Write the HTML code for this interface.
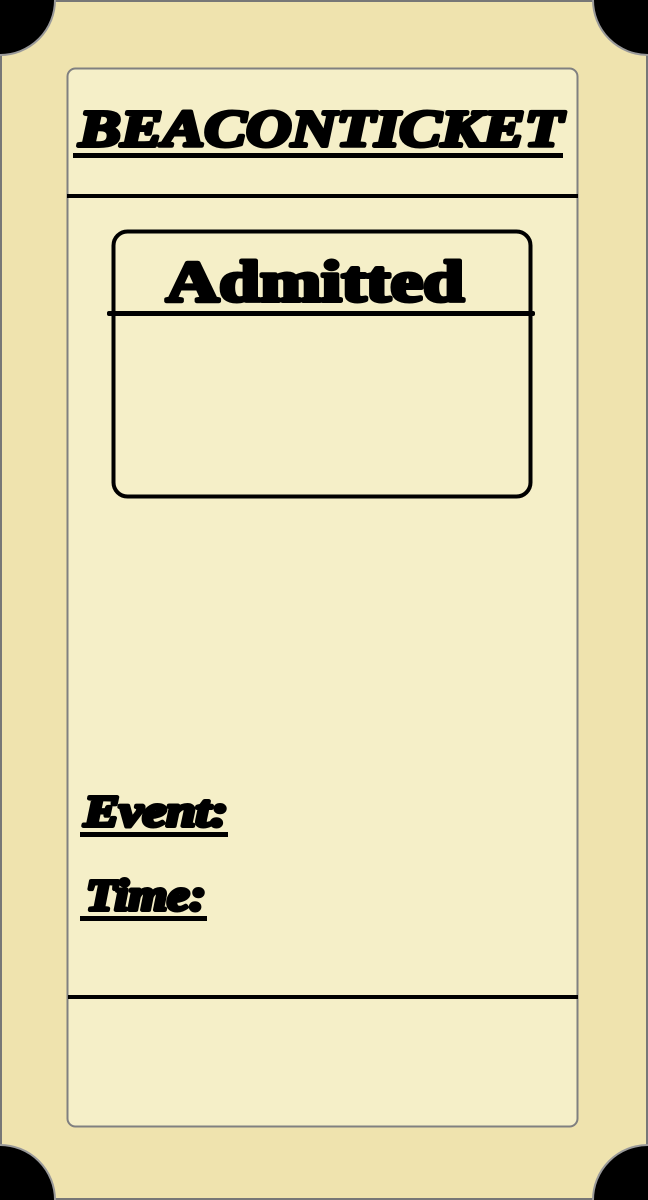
<!DOCTYPE html>
<html><head><meta charset="utf-8"><style>
html,body{margin:0;padding:0;width:648px;height:1200px;overflow:hidden;background:#efe3ae}
svg{display:block}
text{font-family:"Liberation Serif",serif;font-weight:bold;fill:#000;stroke:#000;stroke-width:4;stroke-linejoin:round}
</style></head><body>
<svg width="648" height="1200" viewBox="0 0 648 1200">
<rect x="1" y="1" width="646" height="1198" fill="#efe3ae" stroke="#777" stroke-width="2"/>
<circle cx="0" cy="0" r="55" fill="#000" stroke="#999" stroke-width="2"/>
<circle cx="648" cy="0" r="55" fill="#000" stroke="#999" stroke-width="2"/>
<circle cx="0" cy="1200" r="55" fill="#000" stroke="#999" stroke-width="2"/>
<circle cx="648" cy="1200" r="55" fill="#000" stroke="#999" stroke-width="2"/>
<rect x="67.5" y="68.5" width="510" height="1058" rx="8" fill="#f5efc8" stroke="#808080" stroke-width="2"/>
<text x="79" y="146" font-size="52" font-style="italic" textLength="484" lengthAdjust="spacingAndGlyphs">BEACONTICKET</text>
<rect x="73" y="153" width="490" height="5" fill="#000"/>
<rect x="67" y="194" width="511" height="4" fill="#000"/>
<rect x="113.5" y="231.5" width="417" height="265" rx="14" fill="none" stroke="#000" stroke-width="4"/>
<text x="166" y="301" font-size="58" textLength="298" lengthAdjust="spacingAndGlyphs">Admitted</text>
<rect x="107" y="311" width="428" height="5" rx="2" fill="#000"/>
<text x="84" y="826" font-size="44" font-style="italic" textLength="144" lengthAdjust="spacingAndGlyphs">Event:</text>
<rect x="80" y="832" width="148" height="5" fill="#000"/>
<text x="86" y="910" font-size="44" font-style="italic" textLength="120" lengthAdjust="spacingAndGlyphs">Time:</text>
<rect x="80" y="916" width="127" height="5" fill="#000"/>
<rect x="68" y="995" width="510" height="4" fill="#000"/>
</svg>
</body></html>
